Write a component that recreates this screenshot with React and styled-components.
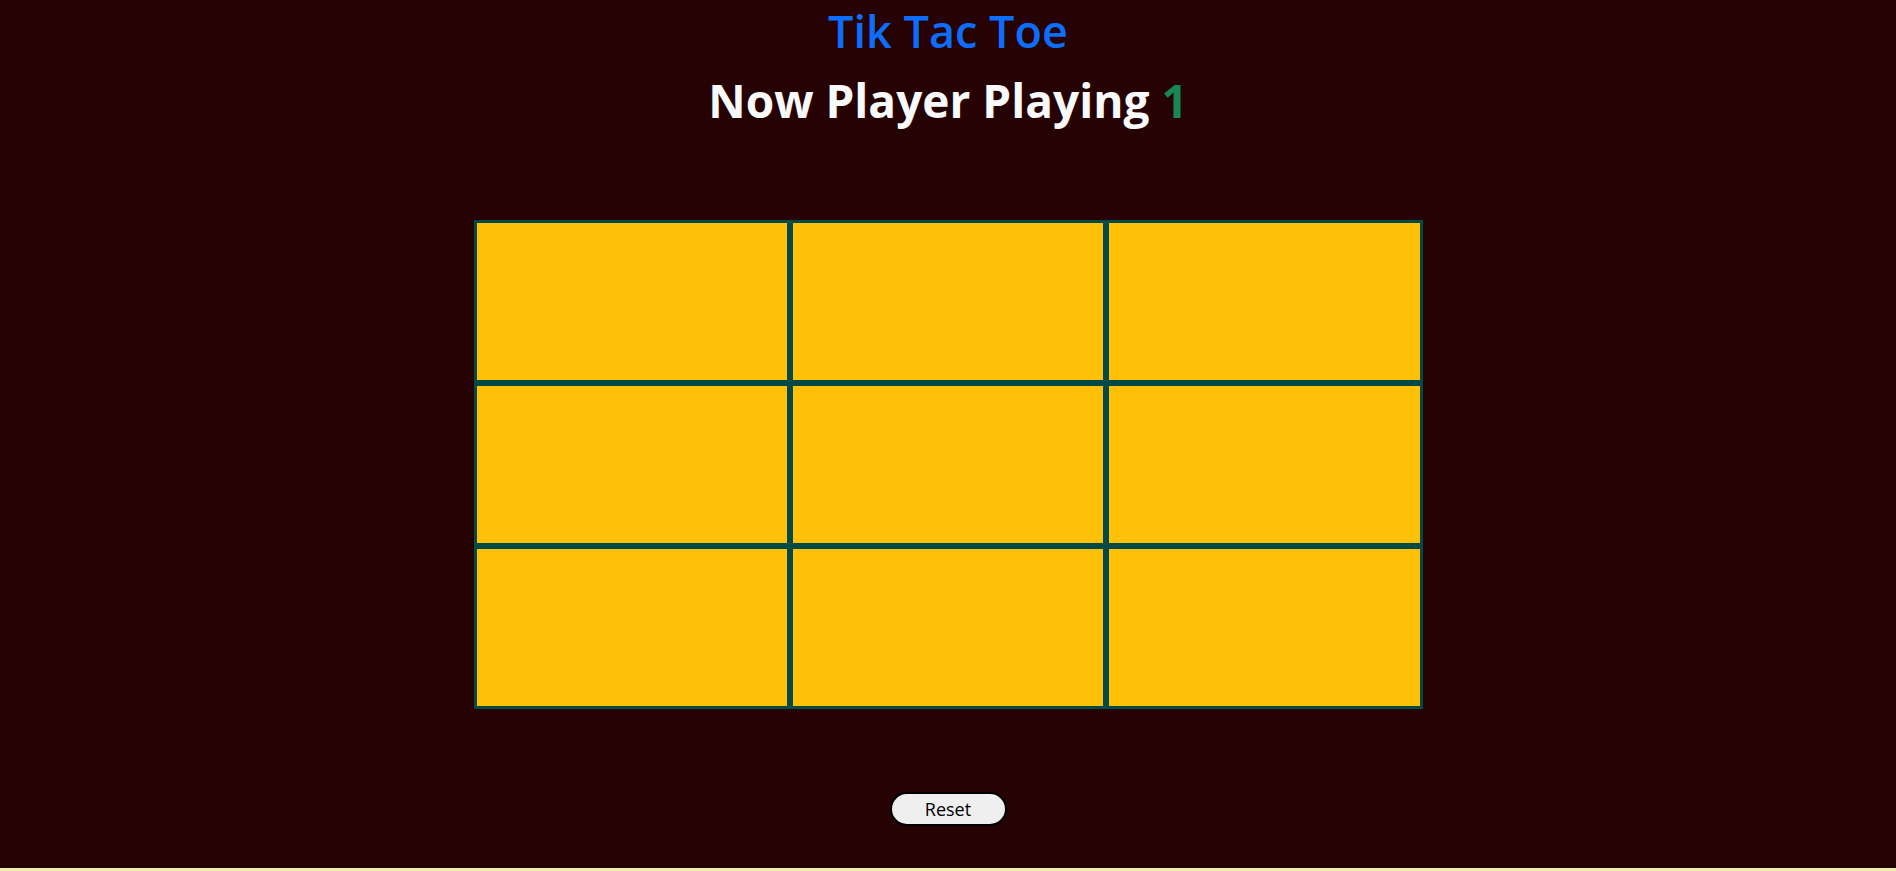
import React, { useState } from "react";
import styled, { createGlobalStyle } from "styled-components";

const GlobalStyle = createGlobalStyle`
  html, body {
    margin: 0;
    padding: 0;
    background-color: #efeeb0;
  }

  body {
    font-family: "Open Sans", "Noto Sans", sans-serif;
  }
`;

export const Page = styled.div`
  background-color: #270204;
  height: 868px;
  display: flex;
  flex-direction: column;
  align-items: center;
`;

export const Title = styled.h1`
  color: #0d6efd;
  font-size: 45px;
  font-weight: 600;
  line-height: 62px;
  margin: 0;
`;

export const Status = styled.h2`
  color: #f8f9fa;
  font-size: 46px;
  font-weight: 700;
  line-height: 54px;
  margin: 11px 0 0;
`;

export const PlayerNumber = styled.span`
  color: #198754;
`;

export const Board = styled.div`
  width: 949px;
  margin-top: 93px;
  display: grid;
  grid-template-columns: repeat(3, 1fr);
`;

export const Cell = styled.div`
  box-sizing: border-box;
  height: 163px;
  background-color: #ffc107;
  border: 3px solid #034a46;
  cursor: pointer;
`;

export const ResetButton = styled.button`
  margin-top: 83px;
  width: 117px;
  height: 34px;
  border: 2px solid #000;
  border-radius: 17px;
  background-color: #efefef;
  color: #000;
  font-family: "Open Sans", "Noto Sans", sans-serif;
  font-size: 18px;
  cursor: pointer;
`;

export default function App() {
  const [cells, setCells] = useState(Array(9).fill(""));
  const [player, setPlayer] = useState(1);

  const play = (i) => {
    if (cells[i]) return;
    const next = [...cells];
    next[i] = player === 1 ? "X" : "O";
    setCells(next);
    setPlayer(player === 1 ? 2 : 1);
  };

  const reset = () => {
    setCells(Array(9).fill(""));
    setPlayer(1);
  };

  return (
    <>
      <GlobalStyle />
      <Page>
        <Title>Tik Tac Toe</Title>
        <Status>
          Now Player Playing <PlayerNumber>{player}</PlayerNumber>
        </Status>
        <Board>
          {cells.map((c, i) => (
            <Cell key={i} onClick={() => play(i)}>
              {c}
            </Cell>
          ))}
        </Board>
        <ResetButton onClick={reset}>Reset</ResetButton>
      </Page>
    </>
  );
}
